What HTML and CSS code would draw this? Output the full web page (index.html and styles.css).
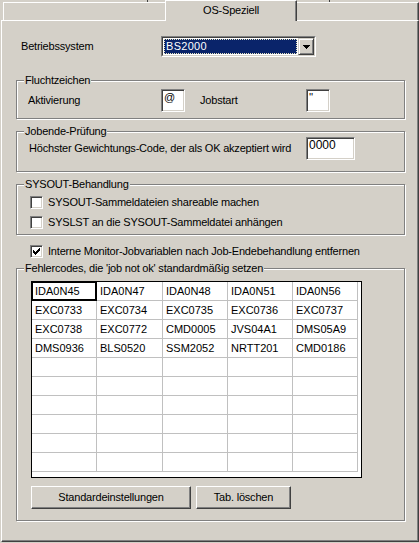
FILE: index.html
```html
<!DOCTYPE html>
<html>
<head>
<meta charset="utf-8">
<link rel="stylesheet" href="styles.css">
</head>
<body>
<div class="backrow">
  <div class="back-seg seg-a"></div>
  <div class="back-seg seg-b"></div>
  <div class="back-seg seg-c"></div>
</div>
<div class="tabstrip">
  <div class="tab tab-left"></div>
  <div class="tab tab-active">OS-Speziell</div>
  <div class="tab tab-right"></div>
</div>
<div class="panel">
  <div class="os-row">
    <span class="os-label">Betriebssystem</span>
    <div class="combo">
      <div class="combo-in">
        <div class="combo-field"><span class="combo-text">BS2000</span></div>
        <div class="combo-btn">
          <svg width="7" height="4" viewBox="0 0 7 4" shape-rendering="crispEdges"><path d="M0 0h7v1h-7zM1 1h5v1h-5zM2 2h3v1h-3zM3 3h1v1h-1z" fill="#000"/></svg>
        </div>
      </div>
    </div>
  </div>

  <div class="group g-flucht">
    <span class="group-title">Fluchtzeichen</span>
    <div class="flucht-row">
      <span class="lbl-akt">Aktivierung</span>
      <div class="edit e-char">@</div>
      <span class="lbl-job">Jobstart</span>
      <div class="edit e-char">''</div>
    </div>
  </div>

  <div class="group g-jobende">
    <span class="group-title">Jobende-Prüfung</span>
    <div class="jobende-row">
      <span class="lbl-code">Höchster Gewichtungs-Code, der als OK akzeptiert wird</span>
      <div class="edit e-code">0000</div>
    </div>
  </div>

  <div class="group g-sysout">
    <span class="group-title">SYSOUT-Behandlung</span>
    <div class="check-row">
      <span class="cb"></span>
      <span class="cb-text">SYSOUT-Sammeldateien shareable machen</span>
    </div>
    <div class="check-row second">
      <span class="cb"></span>
      <span class="cb-text">SYSLST an die SYSOUT-Sammeldatei anhängen</span>
    </div>
  </div>

  <div class="check-row standalone">
    <span class="cb checked">
      <svg width="7" height="7" viewBox="0 0 7 7" shape-rendering="crispEdges"><path d="M6 0h1v1h-1zM5 1h2v1h-2zM0 2h1v1h-1zM4 2h3v1h-3zM0 3h2v1h-2zM3 3h3v1h-3zM0 4h5v1h-5zM1 5h3v1h-3zM2 6h1v1h-1z" fill="#000"/></svg>
    </span>
    <span class="cb-text">Interne Monitor-Jobvariablen nach Job-Endebehandlung entfernen</span>
  </div>

  <div class="group g-fehler">
    <span class="group-title">Fehlercodes, die 'job not ok' standardmäßig setzen</span>
    <div class="grid">
      <div class="cell selected">IDA0N45</div><div class="cell">IDA0N47</div><div class="cell">IDA0N48</div><div class="cell">IDA0N51</div><div class="cell">IDA0N56</div>
      <div class="cell">EXC0733</div><div class="cell">EXC0734</div><div class="cell">EXC0735</div><div class="cell">EXC0736</div><div class="cell">EXC0737</div>
      <div class="cell">EXC0738</div><div class="cell">EXC0772</div><div class="cell">CMD0005</div><div class="cell">JVS04A1</div><div class="cell">DMS05A9</div>
      <div class="cell">DMS0936</div><div class="cell">BLS0520</div><div class="cell">SSM2052</div><div class="cell">NRTT201</div><div class="cell">CMD0186</div>
      <div class="cell"></div><div class="cell"></div><div class="cell"></div><div class="cell"></div><div class="cell"></div>
      <div class="cell"></div><div class="cell"></div><div class="cell"></div><div class="cell"></div><div class="cell"></div>
      <div class="cell"></div><div class="cell"></div><div class="cell"></div><div class="cell"></div><div class="cell"></div>
      <div class="cell"></div><div class="cell"></div><div class="cell"></div><div class="cell"></div><div class="cell"></div>
      <div class="cell"></div><div class="cell"></div><div class="cell"></div><div class="cell"></div><div class="cell"></div>
      <div class="cell"></div><div class="cell"></div><div class="cell"></div><div class="cell"></div><div class="cell"></div>
    </div>
    <div class="buttons">
      <div class="btn btn-std">Standardeinstellungen</div>
      <div class="btn btn-del">Tab. löschen</div>
    </div>
  </div>
</div>
</body>
</html>
```

FILE: styles.css
```css
* { box-sizing: border-box; }
html, body { margin: 0; padding: 0; }
body {
  width: 419px;
  height: 543px;
  overflow: hidden;
  background: #d4d0c8;
  color: #000;
  font-family: "Liberation Sans", Arial, sans-serif;
  font-size: 11px;
  line-height: 13px;
  letter-spacing: -0.2px;
}

/* back row of tabs (only a sliver visible) */
.backrow { height: 2px; display: flex; }
.back-seg { height: 2px; }
.seg-a { width: 148px; border-right: 1px solid #404040; }
.seg-b { width: 182px; border-right: 1px solid #404040; }
.seg-c { flex: 1; }

/* tabs */
.tabstrip { height: 18px; display: flex; align-items: flex-end; }
.tab { height: 18px; background: #d4d0c8; }
.tab-left {
  margin-left: 3px; width: 162px;
  border-top: 1px solid #fff; border-left: 1px solid #fff;
}
.tab-active {
  width: 132px; height: 21px; margin-bottom: -1px;
  border-top: 1px solid #fff; border-left: 1px solid #fff; border-right: 1px solid #404040;
  box-shadow: inset -1px 0 0 #808080;
  position: relative; z-index: 1;
  text-align: center; padding-top: 3px;
}
.tab-right {
  width: 122px;
  border-top: 1px solid #fff; border-right: 1px solid #404040;
  box-shadow: inset -1px 0 0 #808080;
}

/* panel */
.panel {
  margin-left: 1px; width: 418px; height: 522px;
  border: 1px solid; border-color: #fff #404040 #404040 #fff;
  box-shadow: inset -1px -1px 0 #808080;
  padding: 15px 0 0 14px;
}

.os-row { display: flex; align-items: center; height: 21px; }
.os-label { width: 145px; padding-left: 5px; }
.combo {
  width: 155px; height: 21px;
  border: 1px solid; border-color: #808080 #fff #fff #808080;
}
.combo-in {
  height: 19px; display: flex; background: #fff;
  border: 1px solid; border-color: #404040 #d4d0c8 #d4d0c8 #404040;
}
.combo-field { flex: 1; padding: 1px; }
.combo-text {
  display: block; height: 15px; background: #0a246a; color: #fff;
  border: 1px dotted #e8e4c0; padding-left: 1px; line-height: 13px;
  letter-spacing: 0.3px;
}
.combo-btn {
  width: 16px; height: 17px; display: flex; align-items: center; justify-content: center;
  border: 1px solid; border-color: #d4d0c8 #404040 #404040 #d4d0c8;
  box-shadow: inset 1px 1px 0 #fff, inset -1px -1px 0 #808080;
  background: #d4d0c8;
}

/* group boxes */
.group {
  position: relative; width: 389px;
  border: 1px solid #808080;
  box-shadow: inset 1px 1px 0 #fff, 1px 1px 0 #fff;
}
.group-title {
  position: absolute; top: -7px; left: 7px;
  padding: 0 1px; background: #d4d0c8; white-space: nowrap;
}
.g-flucht { margin-top: 23px; padding: 8px 0 6px 11px; }
.flucht-row { display: flex; align-items: center; height: 23px; }
.lbl-akt { width: 133px; }
.lbl-job { width: 106px; margin-left: 15px; }

.edit {
  height: 23px; background: #fff;
  border: 1px solid; border-color: #808080 #fff #fff #808080;
  box-shadow: inset 1px 1px 0 #404040, inset -1px -1px 0 #d4d0c8;
  padding: 1px 0 0 2px;
  letter-spacing: 0;
}
.e-char { width: 24px; }
.e-code { width: 49px; font-size: 12px; }

.g-jobende { margin-top: 12px; padding: 5px 0 11px 12px; }
.jobende-row { display: flex; align-items: center; height: 23px; }
.lbl-code { width: 277px; white-space: nowrap; }

.g-sysout { margin-top: 12px; padding: 11px 0 5px 13px; }
.check-row { display: flex; align-items: center; height: 13px; }
.check-row.second { margin-top: 7px; }
.check-row.standalone { margin: 10px 0 0 14px; }
.cb {
  width: 13px; height: 13px; flex: none; background: #fff;
  border: 1px solid; border-color: #808080 #fff #fff #808080;
  box-shadow: inset 1px 1px 0 #404040, inset -1px -1px 0 #d4d0c8;
  display: flex; padding: 2px 0 0 2px;
}
.cb svg { display: block; }
.cb-text { margin-left: 5px; white-space: nowrap; }

.g-fehler { margin-top: 10px; padding: 12px 0 11px 14px; }
.grid {
  width: 331px; height: 197px;
  border: 1px solid #000; background: #fff;
  display: grid;
  grid-template-columns: 65px 66px 65px 65px 65px;
  grid-auto-rows: 19px;
  align-content: start;
  overflow: hidden;
}
.cell {
  border-right: 1px solid #c0c0c0; border-bottom: 1px solid #c0c0c0;
  padding-left: 3px; line-height: 18px; white-space: nowrap; position: relative;
  letter-spacing: 0;
}
.cell.selected::after {
  content: ""; position: absolute; inset: -1px;
  border: 2px solid #000;
}

.buttons { display: flex; gap: 5px; margin-top: 8px; }
.btn {
  height: 23px; display: flex; align-items: center; justify-content: center;
  border: 1px solid; border-color: #fff #404040 #404040 #fff;
  box-shadow: inset -1px -1px 0 #808080;
}
.btn-std { width: 160px; }
.btn-del { width: 95px; }
```
